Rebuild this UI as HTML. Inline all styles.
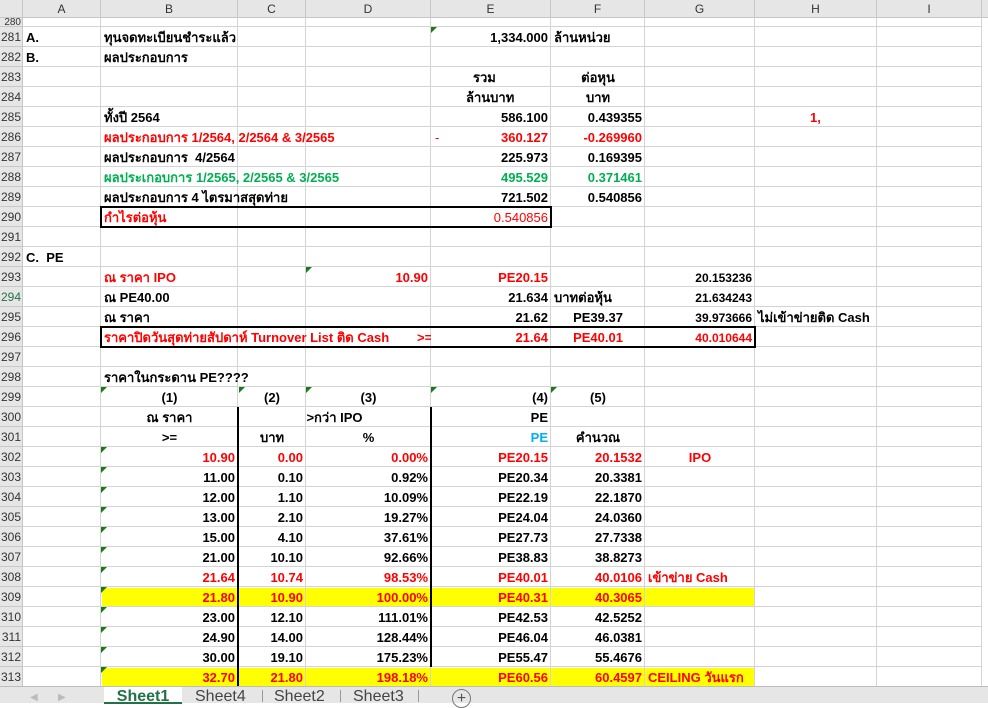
<!DOCTYPE html>
<html><head><meta charset="utf-8">
<style>
*{margin:0;padding:0;box-sizing:border-box}
body{width:988px;height:703px;overflow:hidden;background:#fff;position:relative;font-family:"Liberation Sans","DejaVu Sans",sans-serif}
.hdr{position:absolute;top:0;left:0;width:988px;height:18px;background:#e6e6e6;border-bottom:1px solid #c6c6c6}
.ch{position:absolute;top:0;height:18px;line-height:18px;text-align:center;font-size:12px;color:#333;border-right:1px solid #c8c8c8}
.rh{position:absolute;left:0;width:23px;background:#e6e6e6;font-size:12px;color:#333;text-align:right;padding-right:1px;border-bottom:1px solid #c8c8c8;border-right:1px solid #c6c6c6}
.hl{position:absolute;left:23px;width:959px;height:1px;background:#d4d4d4}
.vl{position:absolute;top:18px;width:1px;height:669px;background:#d4d4d4}
.c{position:absolute;height:20px;line-height:21px;font-size:13px;font-weight:bold;white-space:nowrap;color:#000;padding:0 3px}
.r{text-align:right}.m{text-align:center}
.red{color:#ff0000}.grn{color:#00b050}.blu{color:#00b0f0}
.y{position:absolute;background:#ffff00;height:19px}
.tri{position:absolute;width:0;height:0;border-top:6px solid #1a7a1a;border-right:6px solid transparent}
.box{position:absolute;border:2px solid #000}
.bl{position:absolute;width:2px;background:#000}
.tabs{position:absolute;left:0;top:686px;width:988px;height:17px;background:#e6e6e6;border-top:1px solid #bdbdbd}
.tab{position:absolute;top:0;height:17px;line-height:19px;font-size:16px;color:#444}
</style></head><body>
<div class="hdr"></div>
<div class="ch" style="left:0;width:23px;border-right:1px solid #c8c8c8"></div>
<div class="ch" style="left:23px;width:78px">A</div>
<div class="ch" style="left:101px;width:137px">B</div>
<div class="ch" style="left:238px;width:68px">C</div>
<div class="ch" style="left:306px;width:125px">D</div>
<div class="ch" style="left:431px;width:120px">E</div>
<div class="ch" style="left:551px;width:94px">F</div>
<div class="ch" style="left:645px;width:110px">G</div>
<div class="ch" style="left:755px;width:122px">H</div>
<div class="ch" style="left:877px;width:105px">I</div>

<!-- row headers -->
<div class="rh" style="top:18px;height:9px;line-height:10px;font-size:10px;overflow:hidden">280</div>
<div id="rows"></div>

<!-- yellow fills -->
<div class="y" style="left:102px;top:588px;width:653px"></div>
<div class="y" style="left:102px;top:668px;width:653px"></div>

<!-- gridlines -->
<div class="vl" style="left:100px"></div><div class="vl" style="left:237px"></div><div class="vl" style="left:305px"></div><div class="vl" style="left:430px"></div><div class="vl" style="left:550px"></div><div class="vl" style="left:644px"></div><div class="vl" style="left:754px"></div><div class="vl" style="left:876px"></div><div class="vl" style="left:981px"></div>

<div class="hl" style="top:26px"></div><div class="hl" style="top:46px"></div><div class="hl" style="top:66px"></div><div class="hl" style="top:86px"></div><div class="hl" style="top:106px"></div><div class="hl" style="top:126px"></div><div class="hl" style="top:146px"></div><div class="hl" style="top:166px"></div><div class="hl" style="top:186px"></div><div class="hl" style="top:206px"></div><div class="hl" style="top:226px"></div><div class="hl" style="top:246px"></div><div class="hl" style="top:266px"></div><div class="hl" style="top:286px"></div><div class="hl" style="top:306px"></div><div class="hl" style="top:326px"></div><div class="hl" style="top:346px"></div><div class="hl" style="top:366px"></div><div class="hl" style="top:386px"></div><div class="hl" style="top:406px"></div><div class="hl" style="top:426px"></div><div class="hl" style="top:446px"></div><div class="hl" style="top:466px"></div><div class="hl" style="top:486px"></div><div class="hl" style="top:506px"></div><div class="hl" style="top:526px"></div><div class="hl" style="top:546px"></div><div class="hl" style="top:566px"></div><div class="hl" style="top:586px"></div><div class="hl" style="top:606px"></div><div class="hl" style="top:626px"></div><div class="hl" style="top:646px"></div><div class="hl" style="top:666px"></div>

<!-- row numbers -->
<div class="rh" style="top:27px;height:20px;line-height:21px">281</div>
<div class="rh" style="top:47px;height:20px;line-height:21px">282</div>
<div class="rh" style="top:67px;height:20px;line-height:21px">283</div>
<div class="rh" style="top:87px;height:20px;line-height:21px">284</div>
<div class="rh" style="top:107px;height:20px;line-height:21px">285</div>
<div class="rh" style="top:127px;height:20px;line-height:21px">286</div>
<div class="rh" style="top:147px;height:20px;line-height:21px">287</div>
<div class="rh" style="top:167px;height:20px;line-height:21px">288</div>
<div class="rh" style="top:187px;height:20px;line-height:21px">289</div>
<div class="rh" style="top:207px;height:20px;line-height:21px">290</div>
<div class="rh" style="top:227px;height:20px;line-height:21px">291</div>
<div class="rh" style="top:247px;height:20px;line-height:21px">292</div>
<div class="rh" style="top:267px;height:20px;line-height:21px">293</div>
<div class="rh" style="top:287px;height:20px;line-height:21px;color:#217346">294</div>
<div class="rh" style="top:307px;height:20px;line-height:21px">295</div>
<div class="rh" style="top:327px;height:20px;line-height:21px">296</div>
<div class="rh" style="top:347px;height:20px;line-height:21px">297</div>
<div class="rh" style="top:367px;height:20px;line-height:21px">298</div>
<div class="rh" style="top:387px;height:20px;line-height:21px">299</div>
<div class="rh" style="top:407px;height:20px;line-height:21px">300</div>
<div class="rh" style="top:427px;height:20px;line-height:21px">301</div>
<div class="rh" style="top:447px;height:20px;line-height:21px">302</div>
<div class="rh" style="top:467px;height:20px;line-height:21px">303</div>
<div class="rh" style="top:487px;height:20px;line-height:21px">304</div>
<div class="rh" style="top:507px;height:20px;line-height:21px">305</div>
<div class="rh" style="top:527px;height:20px;line-height:21px">306</div>
<div class="rh" style="top:547px;height:20px;line-height:21px">307</div>
<div class="rh" style="top:567px;height:20px;line-height:21px">308</div>
<div class="rh" style="top:587px;height:20px;line-height:21px">309</div>
<div class="rh" style="top:607px;height:20px;line-height:21px">310</div>
<div class="rh" style="top:627px;height:20px;line-height:21px">311</div>
<div class="rh" style="top:647px;height:20px;line-height:21px">312</div>
<div class="rh" style="top:667px;height:20px;line-height:21px">313</div>

<!-- borders -->
<div class="box" style="left:100px;top:206px;width:452px;height:22px"></div>
<div class="box" style="left:100px;top:326px;width:656px;height:22px"></div>
<div class="bl" style="left:237px;top:407px;height:280px"></div>
<div class="bl" style="left:430px;top:407px;height:260px"></div>

<!-- triangles -->
<div class="tri" style="left:431px;top:27px"></div>
<div class="tri" style="left:306px;top:267px"></div>
<div class="tri" style="left:101px;top:387px"></div>
<div class="tri" style="left:239px;top:387px"></div>
<div class="tri" style="left:306px;top:387px"></div>
<div class="tri" style="left:431px;top:387px"></div>
<div class="tri" style="left:551px;top:387px"></div>
<div class="tri" style="left:101px;top:447px"></div><div class="tri" style="left:101px;top:467px"></div><div class="tri" style="left:101px;top:487px"></div><div class="tri" style="left:101px;top:507px"></div><div class="tri" style="left:101px;top:527px"></div><div class="tri" style="left:101px;top:547px"></div><div class="tri" style="left:101px;top:567px"></div><div class="tri" style="left:101px;top:587px"></div><div class="tri" style="left:101px;top:607px"></div><div class="tri" style="left:101px;top:627px"></div><div class="tri" style="left:101px;top:647px"></div><div class="tri" style="left:101px;top:667px"></div>

<!-- content -->
<div class="c" style="left:23px;top:27px">A.</div>
<div class="c" style="left:101px;top:27px">ทุนจดทะเบียนชำระแล้ว</div>
<div class="c r" style="left:431px;width:120px;top:27px">1,334.000</div>
<div class="c" style="left:551px;top:27px">ล้านหน่วย</div>
<div class="c" style="left:23px;top:47px">B.</div>
<div class="c" style="left:101px;top:47px">ผลประกอบการ</div>
<div class="c" style="left:470px;top:67px">รวม</div>
<div class="c m" style="left:551px;width:94px;top:67px">ต่อหุน</div>
<div class="c" style="left:463px;top:87px">ล้านบาท</div>
<div class="c m" style="left:551px;width:94px;top:87px">บาท</div>

<div class="c" style="left:101px;top:107px">ทั้งปี 2564</div>
<div class="c r" style="left:431px;width:120px;top:107px">586.100</div>
<div class="c r" style="left:551px;width:94px;top:107px">0.439355</div>
<div class="c red" style="left:807px;top:107px">1,</div>

<div class="c red" style="left:101px;top:127px">ผลประกอบการ 1/2564, 2/2564 &amp; 3/2565</div>
<div class="c red" style="left:432px;top:127px;font-weight:normal">-</div>
<div class="c r red" style="left:431px;width:120px;top:127px">360.127</div>
<div class="c r red" style="left:551px;width:94px;top:127px">-0.269960</div>

<div class="c" style="left:101px;top:147px">ผลประกอบการ&nbsp; 4/2564</div>
<div class="c r" style="left:431px;width:120px;top:147px">225.973</div>
<div class="c r" style="left:551px;width:94px;top:147px">0.169395</div>

<div class="c grn" style="left:101px;top:167px">ผลประเกอบการ 1/2565, 2/2565 &amp; 3/2565</div>
<div class="c r grn" style="left:431px;width:120px;top:167px">495.529</div>
<div class="c r grn" style="left:551px;width:94px;top:167px">0.371461</div>

<div class="c" style="left:101px;top:187px">ผลประกอบการ 4 ไตรมาสสุดท่าย</div>
<div class="c r" style="left:431px;width:120px;top:187px">721.502</div>
<div class="c r" style="left:551px;width:94px;top:187px">0.540856</div>

<div class="c red" style="left:101px;top:207px">กำไรต่อหุ้น</div>
<div class="c r red" style="left:431px;width:120px;top:207px;font-weight:normal">0.540856</div>

<div class="c" style="left:23px;top:247px">C.&nbsp; PE</div>

<div class="c red" style="left:101px;top:267px">ณ ราคา IPO</div>
<div class="c r red" style="left:306px;width:125px;top:267px">10.90</div>
<div class="c r red" style="left:431px;width:120px;top:267px">PE20.15</div>
<div class="c r" style="left:645px;width:110px;top:268px;font-size:12px">20.153236</div>

<div class="c" style="left:101px;top:287px">ณ PE40.00</div>
<div class="c r" style="left:431px;width:120px;top:287px">21.634</div>
<div class="c" style="left:551px;top:287px">บาทต่อหุ้น</div>
<div class="c r" style="left:645px;width:110px;top:288px;font-size:12px">21.634243</div>

<div class="c" style="left:101px;top:307px">ณ ราคา</div>
<div class="c r" style="left:431px;width:120px;top:307px">21.62</div>
<div class="c m" style="left:551px;width:94px;top:307px">PE39.37</div>
<div class="c r" style="left:645px;width:110px;top:308px;font-size:12px">39.973666</div>
<div class="c" style="left:755px;top:307px">ไม่เข้าข่ายติด Cash</div>

<div class="c red" style="left:101px;top:327px">ราคาปิดวันสุดท่ายสัปดาห์ Turnover List ติด Cash</div>
<div class="c red" style="left:417px;top:327px;width:14px;overflow:hidden;padding:0">&gt;=</div>
<div class="c r red" style="left:431px;width:120px;top:327px">21.64</div>
<div class="c m red" style="left:551px;width:94px;top:327px">PE40.01</div>
<div class="c r red" style="left:645px;width:110px;top:328px;font-size:12px">40.010644</div>

<div class="c" style="left:101px;top:367px">ราคาในกระดาน PE????</div>

<div class="c m" style="left:101px;width:137px;top:387px">(1)</div>
<div class="c m" style="left:238px;width:68px;top:387px">(2)</div>
<div class="c m" style="left:306px;width:125px;top:387px">(3)</div>
<div class="c r" style="left:431px;width:120px;top:387px">(4)</div>
<div class="c m" style="left:551px;width:94px;top:387px">(5)</div>

<div class="c m" style="left:101px;width:137px;top:407px">ณ ราคา</div>
<div class="c m" style="left:238px;width:193px;top:407px">&gt;กว่า IPO</div>
<div class="c r" style="left:431px;width:120px;top:407px">PE</div>

<div class="c m" style="left:101px;width:137px;top:427px">&gt;=</div>
<div class="c m" style="left:238px;width:68px;top:427px">บาท</div>
<div class="c m" style="left:306px;width:125px;top:427px">%</div>
<div class="c r blu" style="left:431px;width:120px;top:427px">PE</div>
<div class="c m" style="left:551px;width:94px;top:427px">คำนวณ</div>

<!-- data rows -->
<div class="c r red" style="left:101px;width:137px;top:447px">10.90</div><div class="c r red" style="left:238px;width:68px;top:447px">0.00</div><div class="c r red" style="left:306px;width:125px;top:447px">0.00%</div><div class="c r red" style="left:431px;width:120px;top:447px">PE20.15</div><div class="c r red" style="left:551px;width:94px;top:447px">20.1532</div><div class="c m red" style="left:645px;width:110px;top:447px">IPO</div>

<div class="c r" style="left:101px;width:137px;top:467px">11.00</div><div class="c r" style="left:238px;width:68px;top:467px">0.10</div><div class="c r" style="left:306px;width:125px;top:467px">0.92%</div><div class="c r" style="left:431px;width:120px;top:467px">PE20.34</div><div class="c r" style="left:551px;width:94px;top:467px">20.3381</div>

<div class="c r" style="left:101px;width:137px;top:487px">12.00</div><div class="c r" style="left:238px;width:68px;top:487px">1.10</div><div class="c r" style="left:306px;width:125px;top:487px">10.09%</div><div class="c r" style="left:431px;width:120px;top:487px">PE22.19</div><div class="c r" style="left:551px;width:94px;top:487px">22.1870</div>

<div class="c r" style="left:101px;width:137px;top:507px">13.00</div><div class="c r" style="left:238px;width:68px;top:507px">2.10</div><div class="c r" style="left:306px;width:125px;top:507px">19.27%</div><div class="c r" style="left:431px;width:120px;top:507px">PE24.04</div><div class="c r" style="left:551px;width:94px;top:507px">24.0360</div>

<div class="c r" style="left:101px;width:137px;top:527px">15.00</div><div class="c r" style="left:238px;width:68px;top:527px">4.10</div><div class="c r" style="left:306px;width:125px;top:527px">37.61%</div><div class="c r" style="left:431px;width:120px;top:527px">PE27.73</div><div class="c r" style="left:551px;width:94px;top:527px">27.7338</div>

<div class="c r" style="left:101px;width:137px;top:547px">21.00</div><div class="c r" style="left:238px;width:68px;top:547px">10.10</div><div class="c r" style="left:306px;width:125px;top:547px">92.66%</div><div class="c r" style="left:431px;width:120px;top:547px">PE38.83</div><div class="c r" style="left:551px;width:94px;top:547px">38.8273</div>

<div class="c r red" style="left:101px;width:137px;top:567px">21.64</div><div class="c r red" style="left:238px;width:68px;top:567px">10.74</div><div class="c r red" style="left:306px;width:125px;top:567px">98.53%</div><div class="c r red" style="left:431px;width:120px;top:567px">PE40.01</div><div class="c r red" style="left:551px;width:94px;top:567px">40.0106</div><div class="c red" style="left:645px;top:567px">เข้าข่าย Cash</div>

<div class="c r red" style="left:101px;width:137px;top:587px">21.80</div><div class="c r red" style="left:238px;width:68px;top:587px">10.90</div><div class="c r red" style="left:306px;width:125px;top:587px">100.00%</div><div class="c r red" style="left:431px;width:120px;top:587px">PE40.31</div><div class="c r red" style="left:551px;width:94px;top:587px">40.3065</div>

<div class="c r" style="left:101px;width:137px;top:607px">23.00</div><div class="c r" style="left:238px;width:68px;top:607px">12.10</div><div class="c r" style="left:306px;width:125px;top:607px">111.01%</div><div class="c r" style="left:431px;width:120px;top:607px">PE42.53</div><div class="c r" style="left:551px;width:94px;top:607px">42.5252</div>

<div class="c r" style="left:101px;width:137px;top:627px">24.90</div><div class="c r" style="left:238px;width:68px;top:627px">14.00</div><div class="c r" style="left:306px;width:125px;top:627px">128.44%</div><div class="c r" style="left:431px;width:120px;top:627px">PE46.04</div><div class="c r" style="left:551px;width:94px;top:627px">46.0381</div>

<div class="c r" style="left:101px;width:137px;top:647px">30.00</div><div class="c r" style="left:238px;width:68px;top:647px">19.10</div><div class="c r" style="left:306px;width:125px;top:647px">175.23%</div><div class="c r" style="left:431px;width:120px;top:647px">PE55.47</div><div class="c r" style="left:551px;width:94px;top:647px">55.4676</div>

<div class="c r red" style="left:101px;width:137px;top:667px">32.70</div><div class="c r red" style="left:238px;width:68px;top:667px">21.80</div><div class="c r red" style="left:306px;width:125px;top:667px">198.18%</div><div class="c r red" style="left:431px;width:120px;top:667px">PE60.56</div><div class="c r red" style="left:551px;width:94px;top:667px">60.4597</div><div class="c red" style="left:645px;top:667px">CEILING วันแรก</div>

<!-- tabs -->
<div class="tabs">
<div style="position:absolute;left:30px;top:5px;color:#bbb;font-size:10px">&#9664;</div>
<div style="position:absolute;left:58px;top:5px;color:#bbb;font-size:10px">&#9654;</div>
<div class="tab" style="left:104px;width:78px;background:#fff;color:#217346;font-weight:bold;text-align:center;border-bottom:2px solid #217346">Sheet1</div>
<div class="tab" style="left:195px">Sheet4</div>
<div style="position:absolute;left:262px;top:3px;width:1px;height:12px;background:#999"></div>
<div class="tab" style="left:274px">Sheet2</div>
<div style="position:absolute;left:340px;top:3px;width:1px;height:12px;background:#999"></div>
<div class="tab" style="left:353px">Sheet3</div>
<div style="position:absolute;left:418px;top:3px;width:1px;height:12px;background:#999"></div>
<div style="position:absolute;left:452px;top:2px;width:19px;height:19px;border:1px solid #777;border-radius:50%;text-align:center;line-height:17px;color:#555;font-size:16px">+</div>
</div>
</body></html>
